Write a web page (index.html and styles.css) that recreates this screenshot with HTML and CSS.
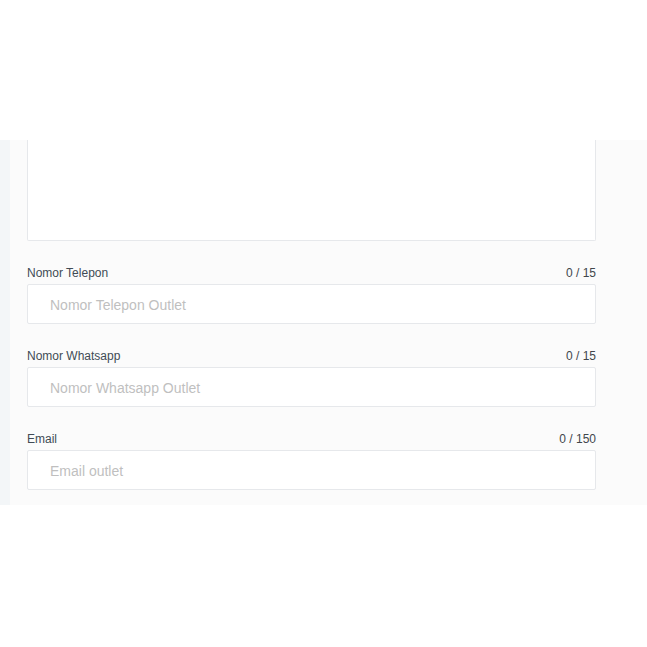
FILE: index.html
```html
<!DOCTYPE html>
<html lang="id">
<head>
<meta charset="utf-8">
<title>Form Outlet</title>
<link rel="stylesheet" href="styles.css">
</head>
<body>
<div class="top-space"></div>
<div class="panel">
  <div class="side-strip"></div>
  <div class="content">
    <div class="textarea-box"></div>
    <div class="field">
      <div class="field-head"><span class="label">Nomor Telepon</span><span class="count">0 / 15</span></div>
      <input class="input" type="text" placeholder="Nomor Telepon Outlet">
    </div>
    <div class="field">
      <div class="field-head"><span class="label">Nomor Whatsapp</span><span class="count">0 / 15</span></div>
      <input class="input" type="text" placeholder="Nomor Whatsapp Outlet">
    </div>
    <div class="field">
      <div class="field-head"><span class="label">Email</span><span class="count">0 / 150</span></div>
      <input class="input" type="text" placeholder="Email outlet">
    </div>
  </div>
</div>
</body>
</html>
```

FILE: styles.css
```css
html, body {
  margin: 0;
  padding: 0;
  background: #ffffff;
  font-family: "Liberation Sans", Arial, sans-serif;
}
.top-space {
  height: 140px;
}
.panel {
  display: flex;
  width: 647px;
}
.side-strip {
  width: 10px;
  background: #f3f6f8;
  flex: none;
}
.content {
  flex: 1;
  background: #fbfbfb;
  padding: 0 51px 15px 17px;
  display: flex;
  flex-direction: column;
  gap: 25px;
}
.textarea-box {
  height: 100px;
  background: #ffffff;
  border: 1px solid #e6e8eb;
  border-top: none;
  border-radius: 0 0 2px 2px;
}
.field {
  display: flex;
  flex-direction: column;
  gap: 4px;
}
.field-head {
  display: flex;
  justify-content: space-between;
  font-size: 12px;
  line-height: 14px;
  color: #414b55;
}
.count {
  color: #41464b;
}
.input {
  box-sizing: border-box;
  height: 40px;
  width: 100%;
  margin: 0;
  border: 1px solid #e6e8eb;
  border-radius: 2px;
  background: #ffffff;
  padding: 1px 10px 0 22px;
  font-family: "Liberation Sans", Arial, sans-serif;
  font-size: 14px;
  color: #333;
  outline: none;
}
.input::placeholder {
  color: #bfbfbf;
}
```
